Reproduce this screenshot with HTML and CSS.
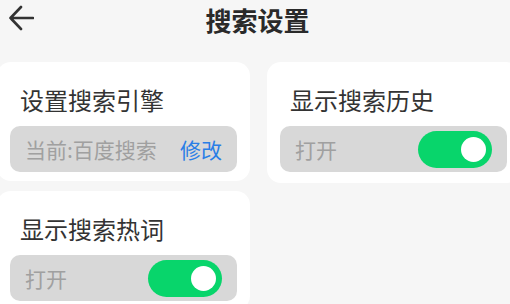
FILE: index.html
```html
<!DOCTYPE html>
<html lang="zh-CN">
<head>
  <meta charset="UTF-8">
  <title>搜索设置</title>
  <link rel="stylesheet" href="styles.css">
</head>
<body>

<div class="page">
  <div class="header">
    <span class="back">
      <svg width="26" height="26" viewBox="0 0 26 26">
        <path d="M25 13 H2.5 M13 2 L2.5 13 L13 24" fill="none" stroke="#333" stroke-width="2.6" stroke-linecap="round" stroke-linejoin="round"/>
      </svg>
    </span>
    <h1>搜索设置</h1>
  </div>

  <div class="grid">
    <div class="col">
      <div class="card">
        <div class="card-title">设置搜索引擎</div>
        <div class="bar">
          <span class="bar-text">当前:百度搜索</span>
          <span class="link">修改</span>
        </div>
      </div>
      <div class="card">
        <div class="card-title">显示搜索热词</div>
        <div class="bar">
          <span class="bar-text">打开</span>
          <span class="switch on"><span class="knob"></span></span>
        </div>
      </div>
    </div>
    <div class="col">
      <div class="card tall">
        <div class="card-title">显示搜索历史</div>
        <div class="bar">
          <span class="bar-text">打开</span>
          <span class="switch on"><span class="knob"></span></span>
        </div>
      </div>
    </div>
  </div>
</div>

</body>
</html>
```

FILE: styles.css
```css
body {
  margin: 0;
  background-color: #f6f6f6;
  font-family: "Noto Sans CJK SC", "Noto Sans", sans-serif;
  color: #333;
}
.page {
  width: 510px;
  height: 304px;
  overflow: hidden;
}
.header {
  position: relative;
  height: 62px;
}
.back {
  position: absolute;
  left: 8px;
  top: 5px;
  display: block;
  width: 26px;
  height: 26px;
}
.back svg {
  display: block;
}
.header h1 {
  margin: 0;
  padding-top: 1px;
  padding-left: 5px;
  text-align: center;
  font-size: 26px;
  line-height: 38px;
  font-weight: 700;
  color: #2a2a2a;
}
.grid {
  display: flex;
  gap: 17px;
  margin-left: -3px;
}
.col {
  display: flex;
  flex-direction: column;
  gap: 10px;
  width: 253px;
  flex-shrink: 0;
}
.card {
  background: #fff;
  border-radius: 14px;
  padding: 0 13px 9px;
}
.card.tall {
  padding-bottom: 11px;
}
.card-title {
  padding: 14px 10px 0;
  line-height: 48px;
  font-size: 24px;
  margin-bottom: 2px;
  color: #333;
}
.bar {
  display: flex;
  align-items: center;
  justify-content: space-between;
  height: 46px;
  padding: 0 15px;
  background: #d8d8d8;
  border-radius: 10px;
}
.bar-text {
  font-size: 21px;
  color: #a0a0a0;
}
.link {
  font-size: 21px;
  color: #2a7ee6;
}
.switch {
  display: flex;
  align-items: center;
  justify-content: flex-end;
  width: 74px;
  height: 37px;
  padding-right: 6px;
  box-sizing: border-box;
  border-radius: 19px;
  background: #08d56b;
}
.knob {
  width: 25px;
  height: 25px;
  border-radius: 50%;
  background: #fff;
}
```
